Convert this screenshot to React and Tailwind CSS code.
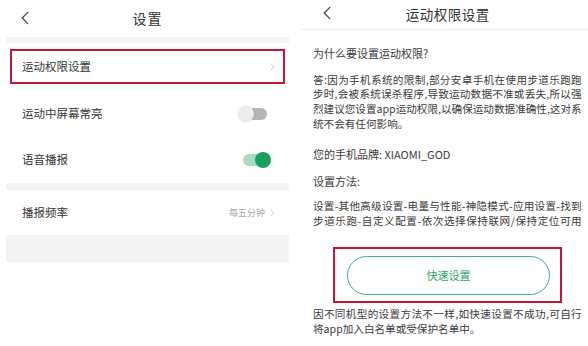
import React from 'react';

const font = { fontFamily: '"Noto Sans CJK SC", "Noto Sans", sans-serif' };

function Chevron({ className }) {
  return (
    <svg viewBox="0 0 8 14" className={className} fill="none" stroke="currentColor" strokeWidth="1.6" strokeLinecap="round" strokeLinejoin="round">
      <path d="M1.5 1.5 L6.5 7 L1.5 12.5" />
    </svg>
  );
}

function Back() {
  return (
    <svg viewBox="0 0 10 16" className="w-[8px] h-[14px] text-[#444]" fill="none" stroke="currentColor" strokeWidth="1.5" strokeLinecap="round" strokeLinejoin="round">
      <path d="M8.5 1 L1.5 8 L8.5 15" />
    </svg>
  );
}

function Toggle({ on }) {
  if (on) {
    return (
      <div className="relative w-[28px] h-[14px]">
        <div className="absolute left-0 top-[1px] w-[26px] h-[12px] rounded-full bg-[#a8dcc0]" />
        <div className="absolute right-0 top-[-1px] w-[16px] h-[16px] rounded-full bg-[#18a05e]" />
      </div>
    );
  }
  return (
    <div className="relative w-[29px] h-[16px]">
      <div className="absolute right-0 top-[2px] w-[24px] h-[12px] rounded-full bg-[#b5b5b5]" />
      <div className="absolute left-0 top-0 w-[16px] h-[16px] rounded-full bg-[#ededed] shadow-[0_0_2px_rgba(0,0,0,0.15)]" />
    </div>
  );
}

// full-width lines are justified so they end at the same edge as in the screenshot
function Line({ children, full = true }) {
  return (
    <span className={full ? 'block whitespace-nowrap text-justify [text-align-last:justify]' : 'block whitespace-nowrap'}>
      {children}
    </span>
  );
}

function SettingsPanel() {
  return (
    <div className="w-[295px] shrink-0 flex flex-col">
      <div className="h-[37px] relative flex items-center justify-center">
        <div className="absolute left-[21px] top-[11px]"><Back /></div>
        <span className="text-[14px] text-[#333] tracking-[1px]">设置</span>
      </div>
      <div className="mx-[6px] h-[6px] bg-[#f4f4f4]" />
      <div className="mx-[6px] h-[47px] py-[6px] px-[4px]">
        <div className="h-full border-2 border-[#c8143c] flex items-center justify-between pl-[10px] pr-[8px]">
          <span className="text-[11.5px] text-[#333]">运动权限设置</span>
          <Chevron className="w-[5px] h-[8px] text-[#c4c4c4]" />
        </div>
      </div>
      <div className="mx-[6px] h-[47px] flex items-center justify-between pl-[16px] pr-[22px]">
        <span className="text-[11.5px] text-[#333]">运动中屏幕常亮</span>
        <Toggle on={false} />
      </div>
      <div className="mx-[6px] h-[46px] flex items-center justify-between pl-[16px] pr-[18px]">
        <span className="text-[11.5px] text-[#333]">语音播报</span>
        <Toggle on />
      </div>
      <div className="mx-[6px] h-[7px] bg-[#f4f4f4]" />
      <div className="mx-[6px] h-[45px] flex items-center justify-between pl-[16px] pr-[14px]">
        <span className="text-[11.5px] text-[#333]">播报频率</span>
        <div className="flex items-center gap-[5px]">
          <span className="text-[9px] text-[#a8a8a8]">每五分钟</span>
          <Chevron className="w-[5px] h-[8px] text-[#c4c4c4]" />
        </div>
      </div>
      <div className="mx-[6px] h-[27px] bg-[#f4f4f4]" />
    </div>
  );
}

function PermissionPanel() {
  return (
    <div className="flex-1 ml-[5px] flex flex-col">
      <div className="h-[30px] relative flex items-center justify-center border-b border-[#f0f0f0]">
        <div className="absolute left-[23px] top-[6px]"><Back /></div>
        <span className="text-[13.5px] text-[#333] tracking-[0.5px]">运动权限设置</span>
      </div>
      <div className="pl-[13px] pr-[14px] text-[10.6px] leading-[14.7px] text-[#3a3a3a]">
        <p className="mt-[16px] text-[11px]">为什么要设置运动权限?</p>
        <div className="mt-[12px]">
          <Line>答:因为手机系统的限制,部分安卓手机在使用步道乐跑跑</Line>
          <Line>步时,会被系统误杀程序,导致运动数据不准或丢失,所以强</Line>
          <Line>烈建议您设置app运动权限,以确保运动数据准确性,这对系</Line>
          <Line full={false}>统不会有任何影响。</Line>
        </div>
        <p className="mt-[15px] text-[11px]">您的手机品牌: XIAOMI_GOD</p>
        <p className="mt-[13px] text-[11px]">设置方法:</p>
        <div className="mt-[10px]">
          <Line>设置-其他高级设置-电量与性能-神隐模式-应用设置-找到</Line>
          <Line>步道乐跑-自定义配置-依次选择保持联网/保持定位可用</Line>
        </div>
        <div className="mt-[19px] ml-[20px] w-[229px] h-[56px] border-2 border-[#c8143c] pt-[7px] pl-[12px] pr-[10px]">
          <div className="h-[39px] rounded-full border border-[#3fae78] flex items-center justify-center">
            <span className="text-[11px] text-[#2fa36b]">快速设置</span>
          </div>
        </div>
        <div className="mt-[4px]">
          <Line>因不同机型的设置方法不一样,如快速设置不成功,可自行</Line>
          <Line full={false}>将app加入白名单或受保护名单中。</Line>
        </div>
      </div>
    </div>
  );
}

export default function App() {
  return (
    <div className="w-[588px] h-[346px] bg-white flex overflow-hidden" style={font}>
      <SettingsPanel />
      <PermissionPanel />
    </div>
  );
}
